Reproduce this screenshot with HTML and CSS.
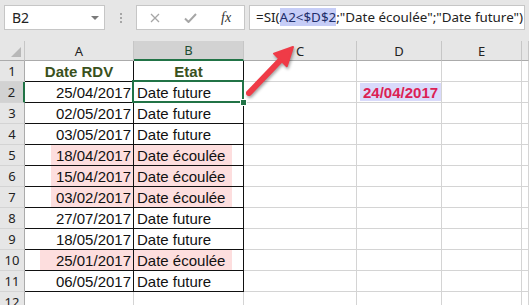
FILE: index.html
```html
<!DOCTYPE html>
<html lang="fr">
<head>
    <meta charset="UTF-8">
    <title>Excel - SI date</title>
    <link rel="stylesheet" href="styles.css">
</head>
<body>
    <div class="excel">
        <div class="toolbar">
            <div class="namebox"><span>B2</span><span class="caret"></span></div>
            <div class="grip"><i></i><i></i><i></i></div>
            <div class="fxbox">
                <svg class="ico-x" width="10" height="10" viewBox="0 0 10 10"><path d="M1 1L9 9M9 1L1 9" stroke="#a6a6a6" stroke-width="1.3" fill="none"/></svg>
                <svg class="ico-ok" width="13" height="10" viewBox="0 0 13 10"><path d="M1 5.5L4.5 9L12 1" stroke="#a6a6a6" stroke-width="2" fill="none"/></svg>
                <span class="fx">fx</span>
            </div>
            <div class="formula">=SI(<span class="sel">A2&lt;$D$2</span>;"Date écoulée";"Date future")</div>
        </div>

        <div class="sheet">
            <!-- en-tetes de colonnes -->
            <div class="hd corner"><span class="tri"></span></div>
            <div class="hd">A</div>
            <div class="hd on">B</div>
            <div class="hd">C</div>
            <div class="hd">D</div>
            <div class="hd">E</div>
            <div class="hd"></div>

            <div class="rh">1</div>
            <div class="cell t title">Date RDV</div>
            <div class="cell t title">Etat</div>
            <div class="cell"></div><div class="cell"></div><div class="cell"></div><div class="cell"></div>

            <div class="rh on">2</div>
            <div class="cell t num">25/04/2017</div>
            <div class="cell t active">Date future</div>
            <div class="cell"></div>
            <div class="cell"><span class="today">24/04/2017</span></div>
            <div class="cell"></div><div class="cell"></div>

            <div class="rh">3</div>
            <div class="cell t num">02/05/2017</div>
            <div class="cell t">Date future</div>
            <div class="cell"></div><div class="cell"></div><div class="cell"></div><div class="cell"></div>

            <div class="rh">4</div>
            <div class="cell t num">03/05/2017</div>
            <div class="cell t">Date future</div>
            <div class="cell"></div><div class="cell"></div><div class="cell"></div><div class="cell"></div>

            <div class="rh">5</div>
            <div class="cell t num"><span class="hl">18/04/2017</span></div>
            <div class="cell t"><span class="hl">Date écoulée</span></div>
            <div class="cell"></div><div class="cell"></div><div class="cell"></div><div class="cell"></div>

            <div class="rh">6</div>
            <div class="cell t num"><span class="hl">15/04/2017</span></div>
            <div class="cell t"><span class="hl">Date écoulée</span></div>
            <div class="cell"></div><div class="cell"></div><div class="cell"></div><div class="cell"></div>

            <div class="rh">7</div>
            <div class="cell t num"><span class="hl">03/02/2017</span></div>
            <div class="cell t"><span class="hl">Date écoulée</span></div>
            <div class="cell"></div><div class="cell"></div><div class="cell"></div><div class="cell"></div>

            <div class="rh">8</div>
            <div class="cell t num">27/07/2017</div>
            <div class="cell t">Date future</div>
            <div class="cell"></div><div class="cell"></div><div class="cell"></div><div class="cell"></div>

            <div class="rh">9</div>
            <div class="cell t num">18/05/2017</div>
            <div class="cell t">Date future</div>
            <div class="cell"></div><div class="cell"></div><div class="cell"></div><div class="cell"></div>

            <div class="rh">10</div>
            <div class="cell t num"><span class="hl wide">25/01/2017</span></div>
            <div class="cell t"><span class="hl">Date écoulée</span></div>
            <div class="cell"></div><div class="cell"></div><div class="cell"></div><div class="cell"></div>

            <div class="rh">11</div>
            <div class="cell t num">06/05/2017</div>
            <div class="cell t">Date future</div>
            <div class="cell"></div><div class="cell"></div><div class="cell"></div><div class="cell"></div>

            <div class="rh">12</div>
            <div class="cell"></div><div class="cell"></div><div class="cell"></div><div class="cell"></div><div class="cell"></div><div class="cell"></div>
        </div>

        <!-- fleche rouge vers la formule -->
        <svg class="arrow" width="60" height="60" viewBox="0 0 60 60">
            <path d="M9 53L40.6 20" stroke="#ef3b47" stroke-width="6" stroke-linecap="round" fill="none"/>
            <path d="M53 7L46.8 26.2L34 13.6Z" fill="#ef3b47" stroke="#ef3b47" stroke-width="2" stroke-linejoin="round"/>
        </svg>
    </div>
</body>
</html>
```

FILE: styles.css
```css
body {
    margin: 0;
    background: #fff;
    font-family: "Liberation Sans", Arial, sans-serif;
}

.excel {
    position: relative;
    width: 529px;
    height: 305px;
    overflow: hidden;
}

/* barre de formule */
.toolbar {
    height: 41px;
    box-sizing: border-box;
    padding-top: 5px;
    background: #e6e6e6;
    display: flex;
    align-items: flex-start;
}

.namebox {
    margin-left: 4px;
    width: 101px;
    height: 25px;
    box-sizing: border-box;
    border: 1px solid #c6c6c6;
    background: #fff;
    display: flex;
    align-items: center;
    justify-content: space-between;
    padding: 0 5px 0 7px;
    font: 14px "Noto Sans", sans-serif;
    color: #222;
}

.caret {
    border-left: 4px solid transparent;
    border-right: 4px solid transparent;
    border-top: 4px solid #7a7a7a;
}

.grip {
    width: 31px;
    height: 25px;
    display: flex;
    flex-direction: column;
    align-items: center;
    justify-content: center;
    gap: 2px;
}

.grip i {
    width: 2px;
    height: 2px;
    background: #a6a6a6;
}

.fxbox {
    width: 109px;
    height: 25px;
    box-sizing: border-box;
    border: 1px solid #c6c6c6;
    background: #fff;
    display: flex;
    align-items: center;
    padding-left: 13px;
}

.ico-ok {
    margin-left: 24px;
}

.fx {
    margin-left: 24px;
    font: italic 14px "Liberation Serif", serif;
    color: #333;
}

.formula {
    margin-left: 4px;
    width: 276px;
    height: 25px;
    box-sizing: border-box;
    border: 1px solid #c6c6c6;
    background: #fff;
    padding-left: 6px;
    font: 13.4px "Noto Sans", sans-serif;
    line-height: 23px;
    color: #222;
    white-space: nowrap;
    overflow: hidden;
}

.formula .sel {
    background: #c6cdf7;
    color: #1f2f6b;
}

/* feuille */
.sheet {
    display: grid;
    grid-template-columns: 25px 109px 110px 113px 85px 80px 1fr;
    grid-template-rows: 20px;
    grid-auto-rows: 21px;
}

.hd {
    background: #e6e6e6;
    border-right: 1px solid #c6c6c6;
    border-bottom: 1px solid #ababab;
    box-sizing: border-box;
    display: flex;
    align-items: center;
    justify-content: center;
    font: 13px "Noto Sans", sans-serif;
    color: #222;
}

.hd.on {
    background: #d2d2d2;
    border-bottom: 2px solid #217346;
    color: #1e4d33;
}

.corner {
    position: relative;
}

.tri {
    position: absolute;
    right: 3px;
    bottom: 3px;
    border-left: 10px solid transparent;
    border-bottom: 10px solid #b8b8b8;
}

.rh {
    background: #e6e6e6;
    border-right: 1px solid #ababab;
    border-bottom: 1px solid #d4d4d4;
    box-sizing: border-box;
    display: flex;
    align-items: center;
    justify-content: center;
    font: 13px "Noto Sans", sans-serif;
    color: #222;
}

.rh.on {
    background: #d2d2d2;
    border-right: 2px solid #217346;
}

.cell {
    border-right: 1px solid #d4d4d4;
    border-bottom: 1px solid #d4d4d4;
    box-sizing: border-box;
    display: flex;
    align-items: center;
    padding: 0 3px;
    font-size: 15px;
    color: #111;
    white-space: nowrap;
}

.cell.t {
    border-right-color: #111;
    border-bottom-color: #111;
}

.cell.num {
    justify-content: flex-end;
    padding-right: 2px;
}

.cell.title {
    justify-content: center;
    font-weight: bold;
    color: #3a511c;
}

.hl {
    align-self: stretch;
    display: flex;
    align-items: center;
    background: #fddede;
    margin-left: -3px;
    padding-left: 3px;
    padding-right: 7px;
}

.num .hl {
    margin-left: 0;
    margin-right: -2px;
    padding-left: 5px;
    padding-right: 2px;
}

.num .hl.wide {
    padding-left: 16px;
}

.today {
    margin-left: 0;
    padding: 0 3px;
    height: 18px;
    display: flex;
    align-items: center;
    background: #d9dafb;
    font-weight: bold;
    color: #dc1f55;
}

/* cellule active B2 */
.active {
    position: relative;
}

.active::after {
    content: "";
    position: absolute;
    top: -2px;
    left: -2px;
    right: -1px;
    bottom: -1px;
    border: 2px solid #217346;
}

.active::before {
    content: "";
    position: absolute;
    right: -4px;
    bottom: -4px;
    width: 5px;
    height: 5px;
    background: #217346;
    border: 1px solid #fff;
    z-index: 1;
}

.arrow {
    position: absolute;
    left: 240px;
    top: 40px;
    filter: drop-shadow(1px 2px 1.5px rgba(0, 0, 0, 0.35));
}
```
